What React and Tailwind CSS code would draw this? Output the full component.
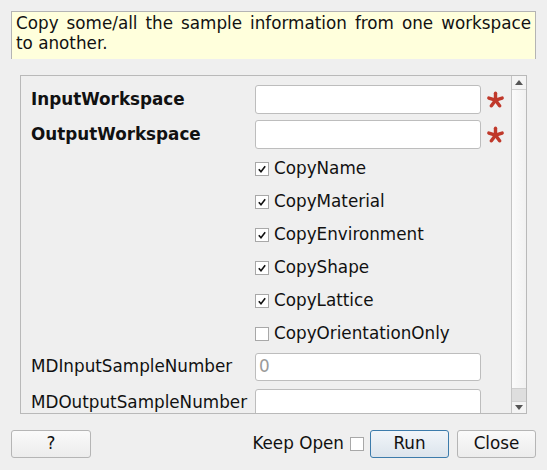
import React from "react";

const Asterisk = () => (
  <svg width="17" height="17" viewBox="0 0 20 20" className="shrink-0">
    <g stroke="#c0392b" strokeWidth="4" strokeLinecap="round">
      {[0, 72, 144, 216, 288].map((a) => (
        <line key={a} x1="10" y1="10.8" x2="10" y2="2.6" transform={`rotate(${a} 10 10.8)`} />
      ))}
    </g>
  </svg>
);

const Check = ({ checked }) => (
  <div className="w-[14px] h-[14px] border border-[#a8a8a8] bg-white flex items-center justify-center shrink-0">
    {checked && (
      <svg width="10" height="10" viewBox="0 0 10 10">
        <path d="M1.8 5.2 L4 7.8 L8.2 2.2" fill="none" stroke="#111" strokeWidth="1.6" />
      </svg>
    )}
  </div>
);

const Field = ({ value }) => (
  <div className="w-[226px] h-full bg-white border border-[#bdbdbd] rounded-[3px] flex items-center px-[3px] text-[#9a9a9a]">
    {value}
  </div>
);

export default function App() {
  const checks = [
    ["CopyName", true],
    ["CopyMaterial", true],
    ["CopyEnvironment", true],
    ["CopyShape", true],
    ["CopyLattice", true],
    ["CopyOrientationOnly", false],
  ];
  return (
    <div
      className="w-[547px] h-[470px] bg-[#efefef] text-[16.8px] text-[#111] overflow-hidden flex flex-col"
      style={{ fontFamily: '"DejaVu Sans", sans-serif' }}
    >
      <div className="shrink-0 mt-[11px] ml-[11px] w-[525px] h-[48px] bg-[#ffffdc] border-t border-x border-[#b4b4b4] px-[4px] pt-[1px] leading-[20px] text-justify">
        Copy some/all the sample information from one workspace to another.
      </div>

      <div className="shrink-0 mt-[16px] ml-[20px] w-[507px] h-[339px] border border-[#b9b9b9] flex">
        <div className="flex-1 overflow-hidden flex flex-col pt-[9px] pl-[10px]">
          <div className="shrink-0 flex items-center h-[29px]">
            <div className="w-[224px] font-bold">InputWorkspace</div>
            <Field />
            <div className="ml-[6px]"><Asterisk /></div>
          </div>
          <div className="shrink-0 flex items-center h-[29px] mt-[6px]">
            <div className="w-[224px] font-bold">OutputWorkspace</div>
            <Field />
            <div className="ml-[6px]"><Asterisk /></div>
          </div>
          <div className="shrink-0 mt-[3px] flex flex-col">
            {checks.map(([label, c]) => (
              <div key={label} className="shrink-0 flex items-center h-[33px] pl-[224px] gap-[5px]">
                <Check checked={c} />
                <span>{label}</span>
              </div>
            ))}
          </div>
          <div className="shrink-0 flex items-center h-[28px] mt-[3px]">
            <div className="w-[224px]">MDInputSampleNumber</div>
            <Field value="0" />
          </div>
          <div className="shrink-0 flex items-center h-[28px] mt-[8px]">
            <div className="w-[224px]">MDOutputSampleNumber</div>
            <Field />
          </div>
        </div>
        <div className="w-[15px] border-l border-[#c4c4c4] flex flex-col bg-[#f4f4f4]">
          <div className="h-[14px] border-b border-[#d2d2d2] flex items-center justify-center">
            <svg width="8" height="5" viewBox="0 0 8 5"><path d="M0 5 L4 0 L8 5 Z" fill="#555" /></svg>
          </div>
          <div className="flex-1 bg-gradient-to-r from-[#fbfbfb] to-[#f1f1f1] border-b border-[#cfcfcf]" />
          <div className="h-[12px] bg-[#dedede]" />
          <div className="h-[12px] border-t border-[#d2d2d2] flex items-center justify-center">
            <svg width="8" height="5" viewBox="0 0 8 5"><path d="M0 0 L4 5 L8 0 Z" fill="#555" /></svg>
          </div>
        </div>
      </div>

      <div className="shrink-0 mt-[16px] mx-[11px] h-[28px] flex items-center">
        <button className="w-[80px] h-[28px] border border-[#b5b5b5] rounded-[3px] bg-gradient-to-b from-[#fafafa] to-[#ececec]">?</button>
        <div className="flex-1" />
        <span>Keep Open</span>
        <div className="ml-[6px]"><Check checked={false} /></div>
        <button className="ml-[6px] w-[79px] h-[28px] border border-[#3c7bab] rounded-[3px] bg-gradient-to-b from-[#f1f5f9] to-[#dce4ec]">Run</button>
        <button className="ml-[8px] w-[79px] h-[28px] border border-[#b5b5b5] rounded-[3px] bg-gradient-to-b from-[#fafafa] to-[#ececec]">Close</button>
      </div>
    </div>
  );
}
